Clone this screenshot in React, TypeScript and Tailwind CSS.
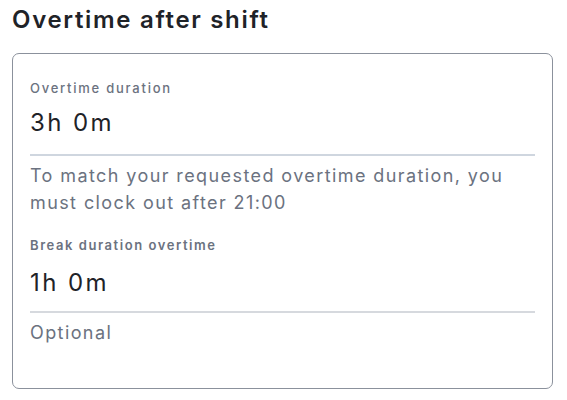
import React from "react";

export default function App() {
  return (
    <div className="w-[567px] h-[400px] bg-white px-3 pt-1" style={{ fontFamily: "Inter, 'Noto Sans', sans-serif" }}>
      <h1 className="text-[24px] leading-8 font-semibold tracking-[0.07em] text-[#1f2328]">Overtime after shift</h1>
      <div className="mt-[17px] w-[541px] h-[336px] rounded-[7px] border border-[#8b919c] px-[17px] pt-[24px]">
        <div className="flex flex-col">
          <div className="text-[13px] leading-5 font-medium tracking-[0.135em] text-[#6b7280]">Overtime duration</div>
          <div className="mt-[9px] text-[24px] leading-8 font-normal tracking-[0.1em] text-[#1f2328]">3h 0m</div>
          <div className="mt-[15px] h-[2px] bg-[#cfd6df]" />
          <div className="mt-[6px] text-[18px] leading-[27px] tracking-[0.078em] text-[#6b7280]">
            To match your requested overtime duration, you must clock out after 21:00
          </div>
          <div className="mt-[19px] text-[13px] leading-5 font-semibold tracking-[0.12em] text-[#6b7280]">Break duration overtime</div>
          <div className="mt-[12px] text-[24px] leading-8 font-normal tracking-[0.1em] text-[#1f2328]">1h 0m</div>
          <div className="mt-[12px] h-[2px] bg-[#d6d9de]" />
          <div className="mt-[6px] text-[18px] leading-[27px] tracking-[0.078em] text-[#6b7280]">Optional</div>
        </div>
      </div>
    </div>
  );
}
